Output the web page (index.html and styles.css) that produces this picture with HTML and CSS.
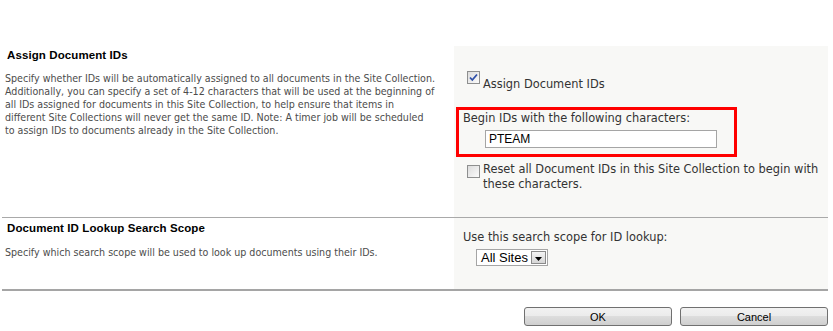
FILE: index.html
```html
<!DOCTYPE html>
<html lang="en">
<head>
    <meta charset="UTF-8">
    <title>Document ID Settings</title>
    <link rel="stylesheet" href="styles.css">
</head>
<body>
    <div class="settings">
        <div class="section">
            <div class="section-info">
                <h3>Assign Document IDs</h3>
                <p>Specify whether IDs will be automatically assigned to all documents in the Site Collection. Additionally, you can specify a set of 4-12 characters that will be used at the beginning of all IDs assigned for documents in this Site Collection, to help ensure that items in different Site Collections will never get the same ID. Note: A timer job will be scheduled to assign IDs to documents already in the Site Collection.</p>
            </div>
            <div class="section-body">
                <div class="check-row check-row-first">
                    <span class="checkbox checked">
                        <svg width="11" height="11" viewBox="0 0 11 11"><path d="M2 5.5 L4.3 8 L9 2.5" fill="none" stroke="#2e4fa8" stroke-width="1.8"/></svg>
                    </span>
                    <label class="check-label">Assign Document IDs</label>
                </div>
                <div class="highlight-box">
                    <label class="field-label" for="prefix">Begin IDs with the following characters:</label>
                    <input type="text" id="prefix" class="text-input" value="PTEAM">
                </div>
                <div class="check-row check-row-second">
                    <span class="checkbox"></span>
                    <label class="check-label">Reset all Document IDs in this Site Collection to begin with these characters.</label>
                </div>
            </div>
        </div>

        <div class="section section-last">
            <div class="section-info">
                <h3>Document ID Lookup Search Scope</h3>
                <p>Specify which search scope will be used to look up documents using their IDs.</p>
            </div>
            <div class="section-body section-body-scope">
                <div class="field-label">Use this search scope for ID lookup:</div>
                <div class="select-box">
                    <span class="select-value">All Sites</span>
                    <span class="select-arrow">
                        <svg width="7" height="4" viewBox="0 0 7 4"><path d="M0 0 H7 L3.5 4 Z" fill="#000"/></svg>
                    </span>
                </div>
            </div>
        </div>

        <div class="actions">
            <button class="action-button">OK</button>
            <button class="action-button">Cancel</button>
        </div>
    </div>
</body>
</html>
```

FILE: styles.css
```css
* {
    margin: 0;
    padding: 0;
    box-sizing: border-box;
}

body {
    font-family: 'Liberation Sans', Arial, sans-serif;
    background-color: #ffffff;
}

.settings {
    width: 826px;
    margin-left: 2px;
    padding-top: 46px;
}

.section {
    display: grid;
    grid-template-columns: 452px 374px;
    height: 172px;
    border-bottom: 1px solid #a9a9a9;
}

.section-last {
    height: 73px;
    border-bottom: 2px solid #a5a5a5;
}

.section-info {
    padding: 3px 18px 0 3px;
}

.section-last .section-info {
    padding-top: 4px;
}

.section-info h3 {
    font-size: 11.5px;
    letter-spacing: 0.1px;
    line-height: 13px;
    font-weight: bold;
    color: #000000;
    padding-left: 2px;
}

.section-info p {
    margin-top: 10px;
    font-family: 'DejaVu Sans Condensed', 'DejaVu Sans', sans-serif;
    font-stretch: condensed;
    font-size: 10.6px;
    line-height: 13px;
    color: #4c4c4c;
}

.section-last .section-info p {
    margin-top: 11px;
}

.section-body {
    background-color: #f8f8f6;
    padding: 25px 0 0 2px;
    font-family: 'DejaVu Sans', Verdana, sans-serif;
    font-size: 11.4px;
    color: #333333;
}

.check-row {
    display: flex;
    align-items: flex-start;
    margin-left: 11px;
}

.checkbox {
    flex: none;
    width: 13px;
    height: 13px;
    border: 1px solid #8e8f8f;
    background: linear-gradient(135deg, #dcdcdc, #fbfbfb);
    display: flex;
    align-items: center;
    justify-content: center;
}

.check-label {
    margin-left: 3px;
    line-height: 15px;
}

.check-row-first .check-label {
    margin-top: 6px;
}

.check-row-second {
    margin-top: 5px;
}

.check-row-second .checkbox {
    margin-top: 3px;
}

.highlight-box {
    margin-top: 15px;
    width: 281px;
    height: 50px;
    border: 3px solid #ff0000;
    padding: 2px 0 0 4px;
}

.field-label {
    display: block;
    line-height: 13px;
}

.text-input {
    display: block;
    margin: 5px 0 0 22px;
    width: 232px;
    height: 18px;
    border: 1px solid #a5a5a5;
    background-color: #ffffff;
    padding: 0 3px;
    font-family: 'Liberation Sans', Arial, sans-serif;
    font-size: 12px;
    color: #000000;
}

.section-body-scope {
    padding: 13px 0 0 9px;
}

.select-box {
    display: flex;
    align-items: center;
    margin: 5px 0 0 13px;
    width: 72px;
    height: 17px;
    border: 1px solid #a5a5a5;
    background-color: #ffffff;
}

.select-value {
    flex: 1;
    padding-left: 4px;
    font-family: 'Liberation Sans', Arial, sans-serif;
    font-size: 13px;
    color: #000000;
}

.select-arrow {
    width: 15px;
    height: 13px;
    margin-right: 1px;
    border: 1px solid #8a8a8a;
    background: linear-gradient(#f4f4f4, #d6d6d6);
    display: flex;
    align-items: center;
    justify-content: center;
    padding-top: 2px;
}

.actions {
    display: flex;
    justify-content: flex-end;
    gap: 8px;
    margin-top: 16px;
}

.action-button {
    width: 148px;
    height: 19px;
    border: 1px solid #707070;
    border-radius: 3px;
    background: linear-gradient(#f2f2f2 0%, #ebebeb 50%, #dddddd 50%, #cfcfcf 100%);
    font-family: 'Liberation Sans', Arial, sans-serif;
    font-size: 11px;
    color: #000000;
}
```
